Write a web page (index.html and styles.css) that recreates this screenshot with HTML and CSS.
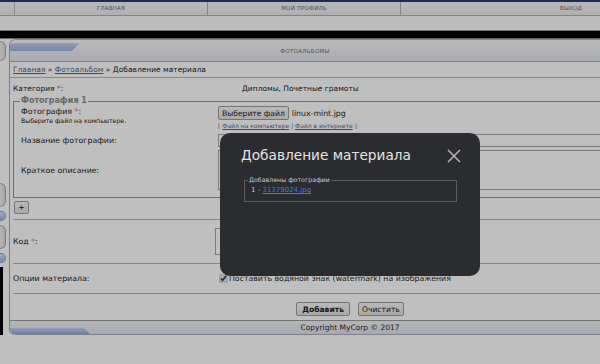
FILE: index.html
```html
<!DOCTYPE html>
<html lang="ru">
<head>
    <meta charset="UTF-8">
    <title>Фотоальбомы - Добавление материала</title>
    <link rel="stylesheet" href="styles.css">
</head>
<body>
    <div class="topline"></div>
    <nav class="nav">
        <span></span>
        <a href="#">Главная</a>
        <a href="#">Мой профиль</a>
        <a href="#" class="exit">Выход</a>
    </nav>
    <div class="subbar"></div>
    <div class="blackbar"></div>

    <div class="layout">
        <aside class="side">
            <i class="knob"></i>
            <i class="gap"></i>
            <i class="knob tall"></i>
            <i class="knob blue"></i>
            <i class="knob tall"></i>
            <i class="knob blue"></i>
            <i class="strip"></i>
        </aside>

        <main class="panel">
            <div class="panel-head">Фотоальбомы</div>
            <div class="crumbs">
                <a href="#">Главная</a> &raquo; <a href="#">Фотоальбом</a> &raquo; Добавление материала
            </div>

            <form class="form">
                <div class="row cat">
                    <label>Категория <b>*</b>:</label>
                    <span class="cat-value">Дипломы, Почетные грамоты</span>
                </div>

                <fieldset class="photo">
                    <legend>Фотография 1</legend>
                    <div class="frow file">
                        <label>Фотография <b>*</b>:<small>Выберите файл на компьютере.</small></label>
                        <div>
                            <div class="picker"><button type="button" class="btn">Выберите файл</button> linux-mint.jpg</div>
                            <div class="src">[ <a href="#">Файл на компьютере</a> | <a href="#">Файл в интернете</a> ]</div>
                        </div>
                    </div>
                    <div class="frow name">
                        <label>Название фотографии:</label>
                        <input type="text" class="inp wide">
                    </div>
                    <div class="frow descr">
                        <label>Краткое описание:</label>
                        <textarea class="inp wide area"></textarea>
                    </div>
                </fieldset>

                <div class="plus-row"><button type="button" class="btn plus">+</button></div>

                <div class="row code">
                    <label>Код <b>*</b>:</label>
                    <input type="text" class="inp code-inp">
                </div>

                <div class="row opts">
                    <label>Опции материала:</label>
                    <span class="check"><input type="checkbox" checked> Поставить водяной знак (watermark) на изображения</span>
                </div>

                <div class="actions">
                    <button type="button" class="btn strong">Добавить</button>
                    <button type="button" class="btn">Очистить</button>
                </div>
            </form>

            <div class="panel-foot">Copyright MyCorp &copy; 2017</div>
        </main>
    </div>

    <div class="shade"></div>

    <div class="modal">
        <div class="modal-head">
            <h2>Добавление материала</h2>
            <svg class="close" width="14" height="14" viewBox="0 0 14 14">
                <path d="M1 1 L13 13 M13 1 L1 13" stroke="#b4b4b6" stroke-width="1.5" fill="none"/>
            </svg>
        </div>
        <fieldset class="added">
            <legend>Добавлены фотографии</legend>
            1 - <a href="#">31379024.jpg</a>
        </fieldset>
    </div>
</body>
</html>
```

FILE: styles.css
```css
html, body {
    margin: 0;
    overflow: hidden;
}

body {
    font-family: "DejaVu Sans", Verdana, sans-serif;
    font-size: 7.8px;
    color: #232323;
    background-color: #ffffff;
    height: 364px;
}

a {
    color: #4f6894;
}

b {
    color: #f05a5a;
    font-weight: normal;
}

.topline {
    height: 2px;
    background-color: #263a68;
}

.nav {
    display: grid;
    grid-template-columns: 15px 193px 193px 1fr;
    height: 13px;
    background: linear-gradient(#f6f6f6, #ececec);
    border-bottom: 1px solid #b0b0b0;
}

.nav span,
.nav a {
    border-right: 1px solid #b8b8b8;
    font-size: 5.5px;
    line-height: 13px;
    text-align: center;
    text-decoration: none;
    text-transform: uppercase;
    color: #6a6a6a;
    letter-spacing: 0.2px;
}

.nav .exit {
    border-right: none;
    text-align: right;
    padding-right: 18px;
}

.subbar {
    height: 14px;
    background-color: #fbfbfb;
    border-bottom: 1px solid #9a9a9a;
}

.blackbar {
    height: 7px;
    background-color: #000;
    border-bottom: 1px solid #8c8c8c;
}

.layout {
    display: flex;
}

.side {
    width: 9px;
    display: flex;
    flex-direction: column;
    padding-top: 2px;
}

.side i {
    display: block;
    width: 5px;
}

.side .knob {
    height: 18px;
    background: linear-gradient(90deg, #f2f2f2, #dcdcdc);
    border: 1px solid #a8a8a8;
    border-left: none;
    border-radius: 0 6px 6px 0;
    margin-bottom: 4px;
}

.side .gap {
    height: 118px;
}

.side .tall {
    height: 22px;
}

.side .blue {
    height: 8px;
    background: linear-gradient(#dde7fb, #99b2e2);
    border-color: #93a6cc;
}

.side .strip {
    width: 3px;
    flex: 1;
    height: 100px;
    background-color: #000;
}

.panel {
    flex: 1;
    min-width: 0;
    border-left: 1px solid #a7a7a7;
    border-radius: 6px 0 0 6px;
}

.panel-head {
    position: relative;
    height: 21px;
    line-height: 23px;
    text-align: center;
    font-size: 5.5px;
    color: #6e6e6e;
    text-transform: uppercase;
    letter-spacing: 0.3px;
    background: linear-gradient(#fbfbfb, #ecedf3 60%, #e3e6f1);
    border-top: 1px solid #b4b4b4;
    border-bottom: 1px solid #adadad;
    border-radius: 6px 0 0 0;
}

.panel-head::before {
    content: "";
    position: absolute;
    left: 0;
    top: 3px;
    width: 70px;
    height: 8px;
    background: linear-gradient(#c4d4f4, #9db4e2);
    clip-path: polygon(0 0, 100% 0, 88% 100%, 0 100%);
    border-radius: 4px 0 0 0;
}

.crumbs {
    font-size: 7.5px;
    padding: 2px 3px 0;
    height: 13px;
    line-height: 11px;
    border-bottom: 1px solid #b8b8b8;
}

.form {
    margin: 0;
}

.row {
    display: grid;
    grid-template-columns: 202px 1fr;
    align-items: center;
    margin-left: 3px;
}

.cat {
    height: 21px;
    margin-left: 0;
    padding-left: 3px;
    font-size: 7.5px;
}

.cat-value {
    padding-left: 27px;
}

.photo {
    margin: -2px 0 0 3px;
    padding: 0 0 7px 7px;
    border: 1px solid #939393;
    border-right: none;
}

.photo legend {
    font-weight: bold;
    color: #8b8b8b;
    padding: 0 1px;
    line-height: 8px;
    font-size: 8px;
    margin-left: -1px;
}

.frow {
    display: grid;
    grid-template-columns: 197px 1fr;
    align-items: center;
}

.frow small {
    display: block;
    font-size: 6.2px;
    line-height: 7px;
}

.file {
    align-items: start;
    padding-top: 1px;
}

.file label {
    padding-top: 1px;
    line-height: 10px;
}

.picker {
    display: flex;
    align-items: center;
    gap: 3px;
}

.src {
    font-size: 6px;
    line-height: 8px;
    color: #4f6894;
    padding-top: 2px;
}

.btn {
    font-family: "DejaVu Sans", Verdana, sans-serif;
    font-size: 7.6px;
    color: #222;
    height: 14px;
    padding: 0 3px;
    background: linear-gradient(#f8f8f8, #e2e2e2);
    border: 1px solid #9c9c9c;
    border-radius: 2px;
}

.inp {
    display: block;
    box-sizing: border-box;
    width: 300px;
    height: 13px;
    border: 1px solid #a5a5a5;
    background-color: #fff;
}

.wide {
    width: 100%;
    border-right: none;
}

.name {
    margin-top: 4px;
}

.descr {
    margin-top: 3px;
}

.descr .area {
    height: 40px;
    resize: none;
}

.plus-row {
    padding: 3px 0 5px 2px;
    border-bottom: 1px solid #b5b5b5;
    margin-left: 3px;
}

.plus-row .btn {
    margin-left: -1px;
    width: 15px;
    height: 13px;
    padding: 0;
    line-height: 10px;
}

.code {
    height: 43px;
    border-bottom: 1px solid #b5b5b5;
}

.code-inp {
    height: 27px;
    margin-left: 0;
    width: 200px;
}

.opts {
    height: 29px;
    border-bottom: 1px solid #b5b5b5;
}

.check {
    display: flex;
    align-items: center;
    gap: 1px;
    margin-left: 4px;
}

.check input {
    margin: 0;
    width: 9px;
    height: 9px;
    accent-color: #dcdcdc;
}

.actions {
    display: flex;
    justify-content: center;
    gap: 8px;
    padding: 8px 0 4px 90px;
    border-bottom: 1px solid #9b9b9b;
}

.actions .btn {
    height: 14px;
}

.strong {
    font-weight: bold;
    padding: 0 5px;
}

.panel-foot {
    position: relative;
    height: 13px;
    line-height: 13px;
    padding-left: 90px;
    text-align: center;
    font-size: 7.5px;
    color: #2a2a2a;
    background: linear-gradient(#f2f3f7, #dfe2ec);
    border-bottom: 1px solid #a9acb8;
    border-radius: 0 0 0 6px;
}

.panel-foot::before {
    content: "";
    position: absolute;
    left: 0;
    bottom: 0;
    width: 80px;
    height: 6px;
    background: linear-gradient(#c6d5f3, #8ea9dc);
    clip-path: polygon(0 0, 92% 0, 100% 100%, 0 100%);
    border-radius: 0 0 0 6px;
}

.shade {
    position: fixed;
    inset: 0;
    background-color: rgba(0, 0, 0, 0.25);
}

.modal {
    position: fixed;
    left: 220px;
    top: 133px;
    width: 260px;
    height: 143px;
    box-sizing: border-box;
    padding: 12px 19px 0 24px;
    background-color: #2b2c2f;
    border-radius: 10px;
    color: #e4e4e4;
}

.modal-head {
    display: flex;
    justify-content: space-between;
    align-items: center;
    margin-left: -3px;
}

.modal-head h2 {
    margin: 0;
    font-size: 13.7px;
    font-weight: normal;
    line-height: 20px;
}

.close {
    margin-top: 1px;
}

.added {
    margin: 11px 4px 0 0;
    padding: 1px 0 5px 6px;
    border: 1px solid #5b5c60;
    font-size: 7px;
    color: #c8c8c8;
    line-height: 11px;
}

.added legend {
    font-size: 6.3px;
    padding: 0 1px;
    margin-left: -3px;
    line-height: 8px;
}

.added a {
    color: #4a7bcc;
}
```
